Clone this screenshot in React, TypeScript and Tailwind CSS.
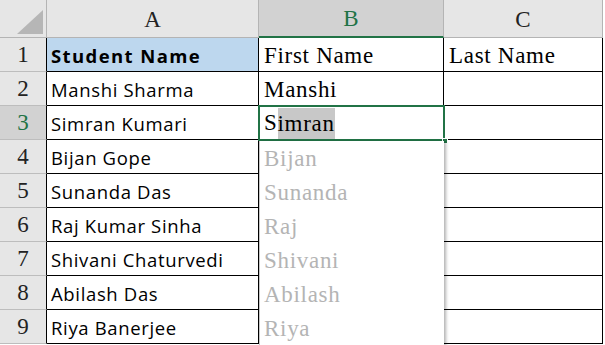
import React from "react";

const rows = [
  ["Student Name", "First Name", "Last Name"],
  ["Manshi Sharma", "Manshi", ""],
  ["Simran Kumari", "Simran", ""],
  ["Bijan Gope", "", ""],
  ["Sunanda Das", "", ""],
  ["Raj Kumar Sinha", "", ""],
  ["Shivani Chaturvedi", "", ""],
  ["Abilash Das", "", ""],
  ["Riya Banerjee", "", ""],
];

const suggestions = ["Bijan", "Sunanda", "Raj", "Shivani", "Abilash", "Riya"];

const serif = "font-['Liberation_Serif',serif]";
const sans = "font-['Open_Sans',sans-serif]";

export default function App() {
  return (
    <div className="w-[605px] h-[345px] bg-white overflow-hidden relative">
      <div className="grid grid-cols-[47px_212px_185px_159px_2px] grid-rows-[38px_repeat(9,34px)]">
        {/* header row */}
        <div className="bg-[#e6e6e6] border-r border-b border-[#b4b4b4] relative">
          <svg width="47" height="38" className="absolute left-0 top-0">
            <polygon points="43,10 43,34 17,34" fill="#b6b6b6" />
          </svg>
        </div>
        <div className={`bg-[#e6e6e6] border-r border-b border-[#b4b4b4] flex items-center justify-center pt-[3px] text-[23px] text-[#222] ${serif}`}>A</div>
        <div className={`bg-[#d2d2d2] border-r border-[#b4b4b4] border-b-2 border-b-[#217346] flex items-center justify-center pt-[3px] text-[23px] text-[#217346] ${serif}`}>B</div>
        <div className={`bg-[#e6e6e6] border-r border-b border-[#b4b4b4] flex items-center justify-center pt-[3px] text-[23px] text-[#222] ${serif}`}>C</div>
        <div className="bg-white"></div>

        {rows.map((r, i) => {
          const sel = i === 2;
          return (
            <React.Fragment key={i}>
              <div
                className={`${sel ? "bg-[#d2d2d2] text-[#217346]" : "bg-[#e6e6e6] text-[#222]"} border-r border-r-black border-b border-b-[#bdbdbd] flex items-center justify-center pt-[2px] text-[23px] ${serif}`}
              >
                {i + 1}
              </div>
              <div
                className={`${i === 0 ? "bg-[#bdd7ee] font-bold tracking-[1.4px]" : "bg-white tracking-[0.65px]"} border-r border-b border-black flex items-center pl-[4px] pt-[2px] text-[18.5px] text-black ${sans}`}
              >
                {r[0]}
              </div>
              <div className={`bg-white border-r border-b border-black flex items-center pl-[5px] pt-[3px] text-[23px] tracking-[0.7px] text-black ${serif}`}>
                {i === 2 ? null : r[1]}
              </div>
              <div className={`bg-white border-r border-b border-black flex items-center pl-[5px] pt-[3px] text-[23px] tracking-[0.7px] text-black ${serif}`}>
                {r[2]}
              </div>
              <div className="bg-white"></div>
            </React.Fragment>
          );
        })}
      </div>

      {/* active cell B3 */}
      <div className="absolute left-[258px] top-[105px] w-[187px] h-[36px] border-2 border-[#217346] bg-white flex items-center pl-[4px]">
        <span className={`text-[23px] tracking-[0.7px] text-black flex items-center ${serif}`}>
          <span>S</span>
          <span className="bg-[#c8c8c8] h-[31px] flex items-center pt-[3px]">imran</span>
        </span>
      </div>
      <div className="absolute left-[442px] top-[138px] w-[6px] h-[6px] bg-[#217346] border border-white"></div>

      {/* autocomplete dropdown */}
      <div className="absolute left-[259px] top-[141px] w-[185px] h-[204px] bg-white border-l border-[#c8c8c8] shadow-[2px_1px_3px_rgba(0,0,0,0.3)] flex flex-col">
        {suggestions.map((s) => (
          <div key={s} className={`h-[34px] flex items-center pl-[4px] pt-[3px] text-[23px] tracking-[0.7px] text-[#b4b4b4] ${serif}`}>
            {s}
          </div>
        ))}
      </div>
    </div>
  );
}
